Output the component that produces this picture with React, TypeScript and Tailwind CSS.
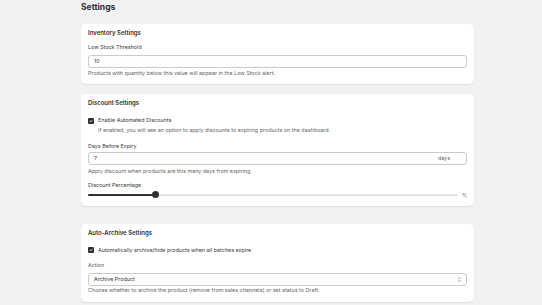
function Checkbox() {
  return (
    <span className="w-[6px] h-[6px] rounded-[1px] bg-[#303030] flex items-center justify-center shrink-0">
      <svg width="4" height="4" viewBox="0 0 10 10" fill="none">
        <path d="M2 5.2 4.2 7.4 8 2.8" stroke="white" strokeWidth="1.8" strokeLinecap="round" strokeLinejoin="round" />
      </svg>
    </span>
  );
}

function Card({ children, className = "" }: { children: React.ReactNode; className?: string }) {
  return (
    <section className={`bg-white rounded-[5px] shadow-[0_1px_1px_rgba(0,0,0,0.08)] px-[7px] pt-[5px] ${className}`}>
      {children}
    </section>
  );
}

export default function App() {
  return (
    <div className="min-h-screen bg-[#f1f1f1] text-[#3a3a3a] font-['Inter',sans-serif] text-[5.4px] leading-[7px] antialiased">
      <div className="ml-[81px] w-[393px] pt-[2px]">
        <h1 className="text-[8.5px] leading-[10px] font-bold text-[#303030]">Settings</h1>

        <Card className="mt-[12px] pb-[7px]">
          <h2 className="text-[6px] leading-[8px] font-semibold text-[#303030]">Inventory Settings</h2>
          <div className="mt-[7px]">Low Stock Threshold</div>
          <div className="mt-[4px] h-[13px] rounded-[3px] border border-[#cbcbcb] bg-[#fdfdfd] flex items-center px-[5px]">
            10
          </div>
          <p className="mt-[2px] text-[#666666]">Products with quantity below this value will appear in the Low Stock alert.</p>
        </Card>

        <Card className="mt-[10px] pb-[7px]">
          <h2 className="text-[6px] leading-[8px] font-semibold text-[#303030]">Discount Settings</h2>
          <label className="mt-[10px] flex items-center gap-[4px]">
            <Checkbox />
            <span>Enable Automated Discounts</span>
          </label>
          <p className="mt-[3px] pl-[10px] text-[#666666]">If enabled, you will see an option to apply discounts to expiring products on the dashboard.</p>
          <div className="mt-[9px]">Days Before Expiry</div>
          <div className="mt-[2px] h-[13px] rounded-[3px] border border-[#cbcbcb] bg-[#fdfdfd] flex items-center justify-between pl-[5px] pr-[16px]">
            <span>7</span>
            <span className="text-[#666666]">days</span>
          </div>
          <p className="mt-[2.5px] text-[#666666]">Apply discount when products are this many days from expiring</p>
          <div className="mt-[7px]">Discount Percentage</div>
          <div className="mt-[3px] h-[7px] flex items-center gap-[4px]">
            <div className="relative flex-1 h-[1.5px] bg-[#e3e3e3] rounded-full">
              <div className="absolute left-0 top-0 h-full w-[67px] bg-[#303030] rounded-full" />
              <div className="absolute left-[64px] top-[-3px] w-[7px] h-[7px] rounded-full bg-[#303030]" />
            </div>
            <span className="w-[5px] text-[#666666]">%</span>
          </div>
        </Card>

        <Card className="mt-[18px] pb-[8px]">
          <h2 className="text-[6px] leading-[8px] font-semibold text-[#303030]">Auto-Archive Settings</h2>
          <label className="mt-[10px] flex items-center gap-[4px]">
            <Checkbox />
            <span>Automatically archive/hide products when all batches expire</span>
          </label>
          <div className="mt-[8.5px] text-[#666666]">Action</div>
          <div className="mt-[3.5px] h-[13px] rounded-[3px] border border-[#cbcbcb] bg-[#fdfdfd] flex items-center justify-between pl-[5px] pr-[4px]">
            <span>Archive Product</span>
            <svg width="5" height="7" viewBox="0 0 10 14" fill="none" stroke="#8a8a8a" strokeWidth="1.5" strokeLinecap="round" strokeLinejoin="round">
              <path d="M3 5 5 3 7 5" />
              <path d="M3 9 5 11 7 9" />
            </svg>
          </div>
          <p className="mt-[1.5px] text-[#666666]">Choose whether to archive the product (remove from sales channels) or set status to Draft.</p>
        </Card>
      </div>
    </div>
  );
}
